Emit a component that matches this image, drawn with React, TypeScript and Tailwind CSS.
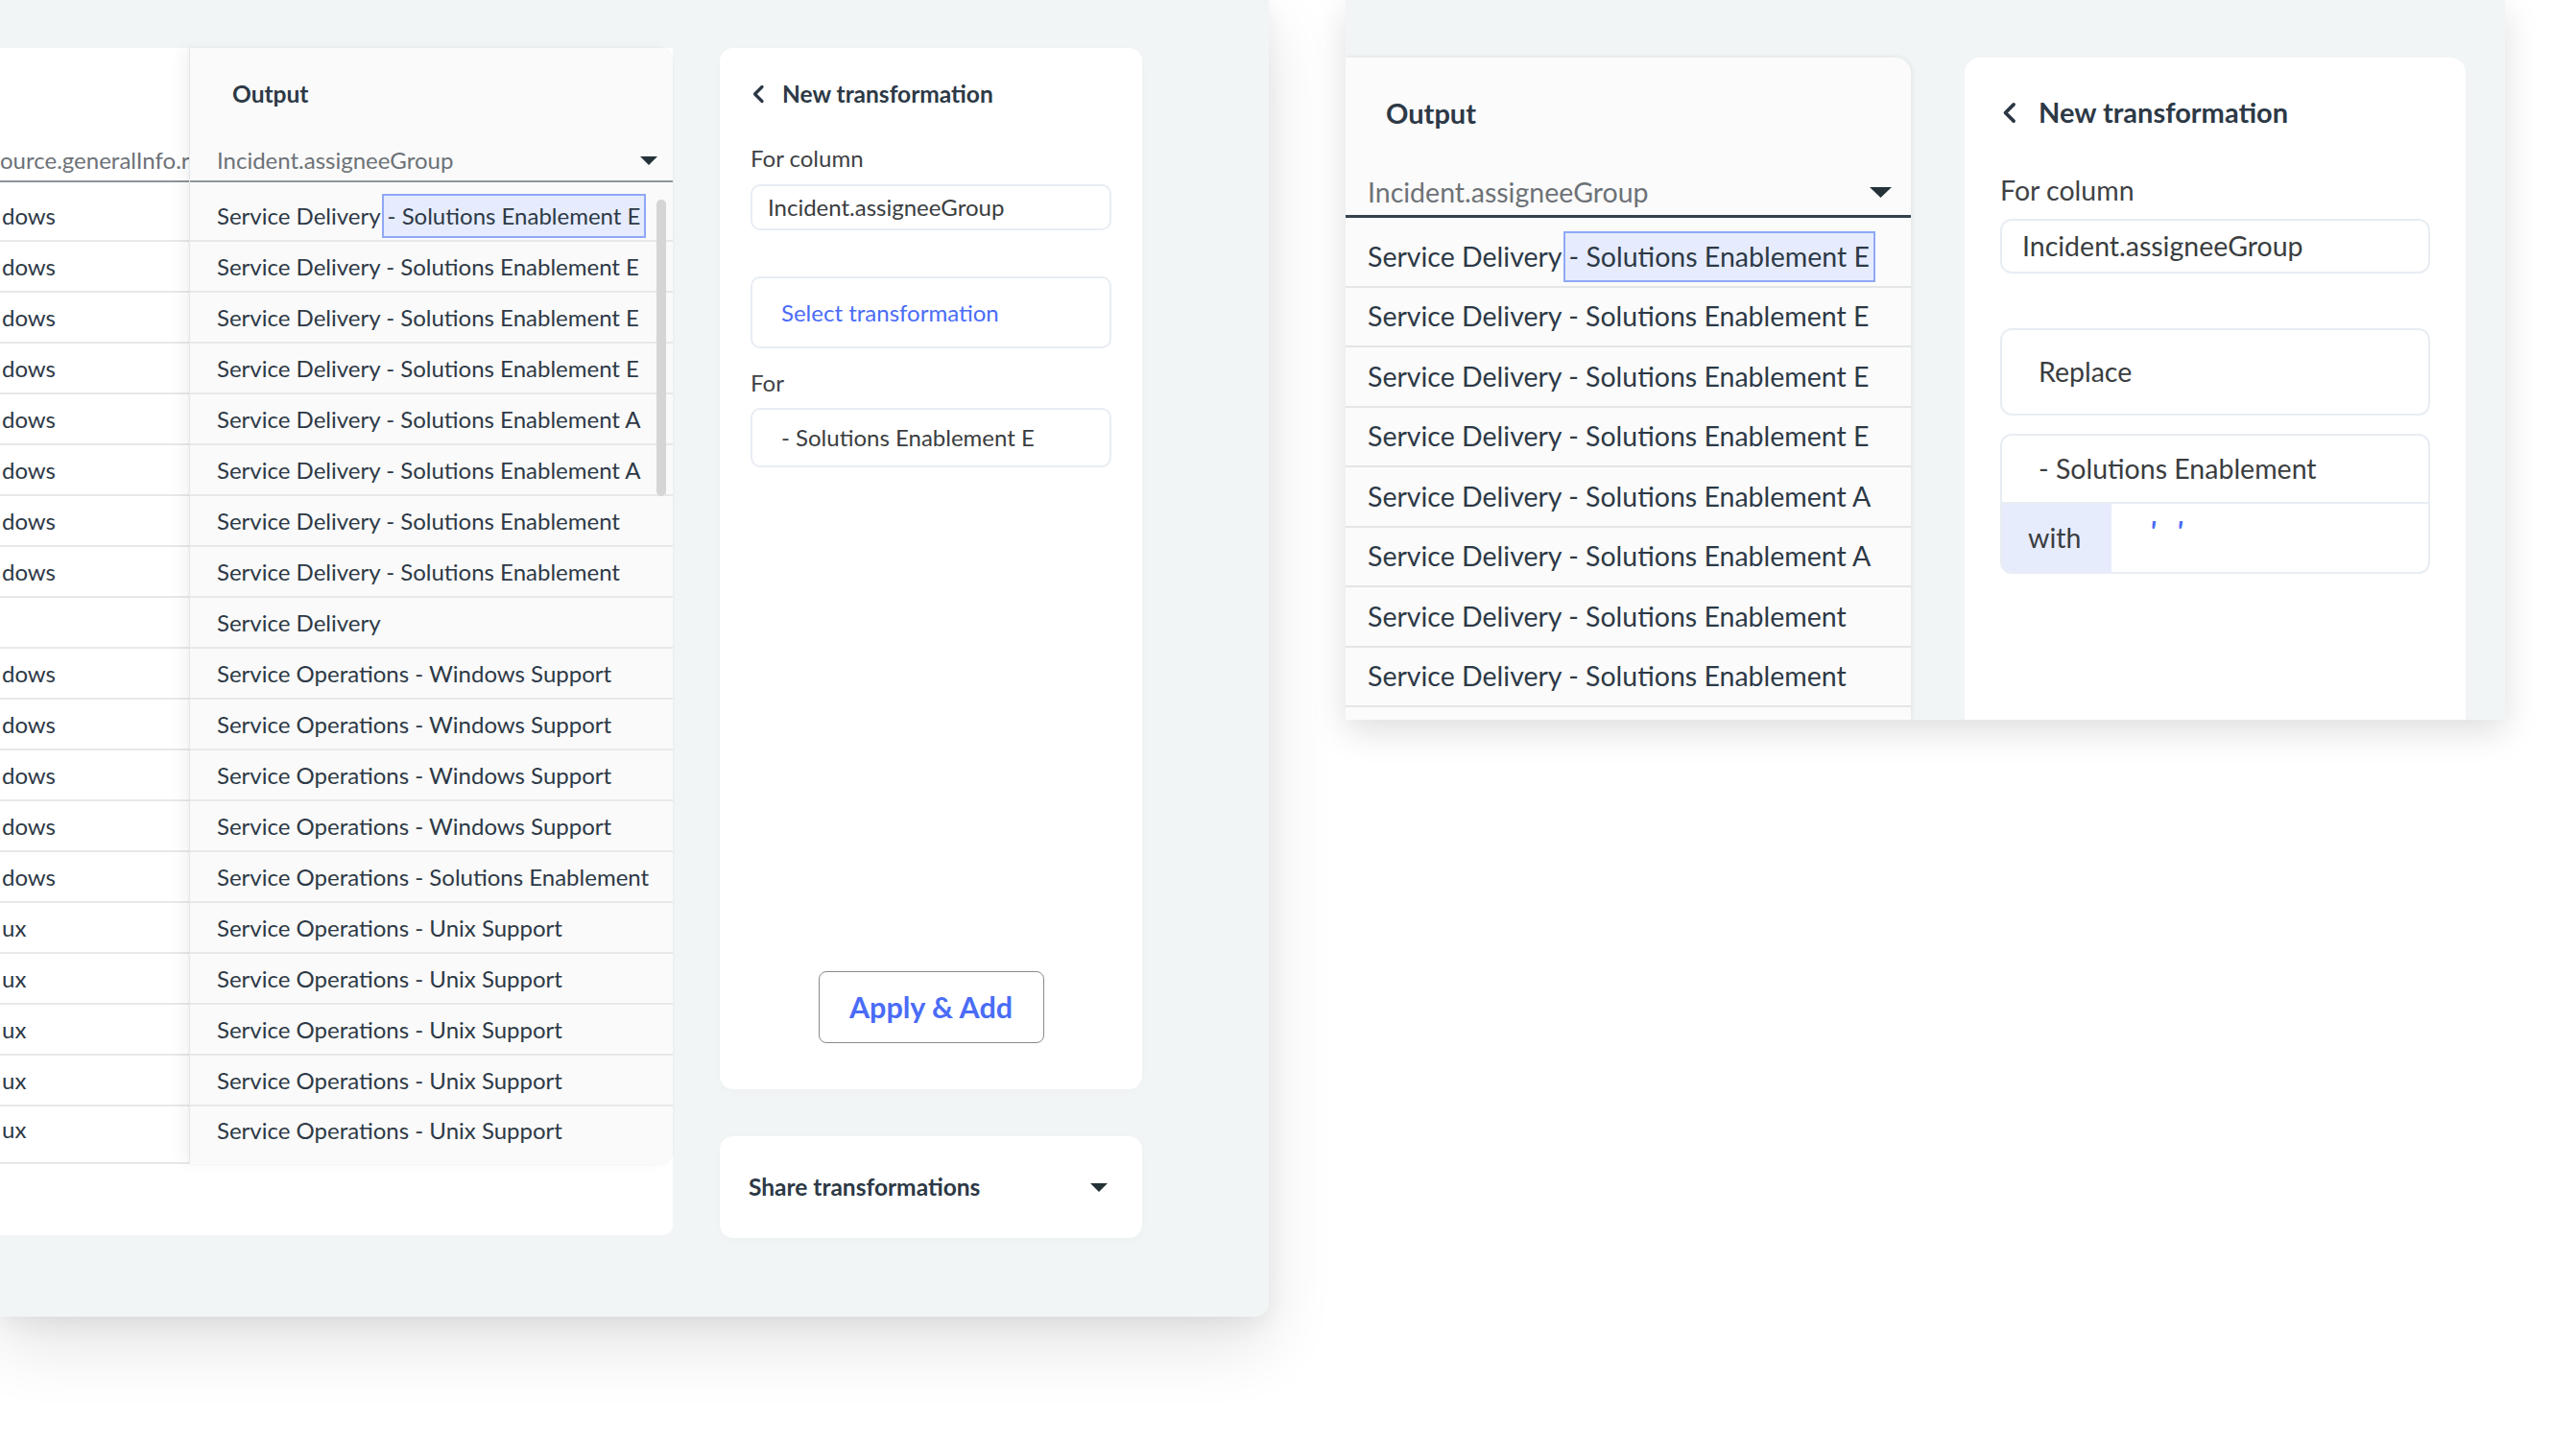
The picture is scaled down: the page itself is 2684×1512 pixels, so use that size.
import React from 'react';

type Row = { src: string; out: string; mark?: boolean };

const leftRows: Row[] = [
  { src: 'dows', out: 'Service Delivery', mark: true },
  { src: 'dows', out: 'Service Delivery - Solutions Enablement E' },
  { src: 'dows', out: 'Service Delivery - Solutions Enablement E' },
  { src: 'dows', out: 'Service Delivery - Solutions Enablement E' },
  { src: 'dows', out: 'Service Delivery - Solutions Enablement A' },
  { src: 'dows', out: 'Service Delivery - Solutions Enablement A' },
  { src: 'dows', out: 'Service Delivery - Solutions Enablement' },
  { src: 'dows', out: 'Service Delivery - Solutions Enablement' },
  { src: '', out: 'Service Delivery' },
  { src: 'dows', out: 'Service Operations - Windows Support' },
  { src: 'dows', out: 'Service Operations - Windows Support' },
  { src: 'dows', out: 'Service Operations - Windows Support' },
  { src: 'dows', out: 'Service Operations - Windows Support' },
  { src: 'dows', out: 'Service Operations - Solutions Enablement' },
  { src: 'ux', out: 'Service Operations - Unix Support' },
  { src: 'ux', out: 'Service Operations - Unix Support' },
  { src: 'ux', out: 'Service Operations - Unix Support' },
  { src: 'ux', out: 'Service Operations - Unix Support' },
  { src: 'ux', out: 'Service Operations - Unix Support' },
];

const rightRows: Row[] = leftRows.slice(0, 8).concat([{ src: '', out: '' }]);

const Caret = ({ w, h }: { w: number; h: number }) => (
  <svg width={w} height={h} viewBox="0 0 18 9" preserveAspectRatio="none">
    <path d="M0 0h18L9 9z" fill="#243238" />
  </svg>
);

const Back = ({ w, h }: { w: number; h: number }) => (
  <svg width={w} height={h} viewBox="0 0 16 20" fill="none">
    <path d="M12 2.5L4.5 10l7.5 7.5" stroke="#2b3744" strokeWidth="3.2" strokeLinecap="round" strokeLinejoin="round" />
  </svg>
);

const Marked = ({ row }: { row: Row }) =>
  row.mark ? (
    <>
      {row.out}
      <span className="ml-[1px] px-[4px] py-[3px] bg-[#e6ecfd] border-2 border-[#8fa8f6]">- Solutions Enablement E</span>
    </>
  ) : (
    <>{row.out}</>
  );

export default function App() {
  return (
    <div className="w-[2684px] h-[1512px] bg-white overflow-hidden flex items-start font-[Lato,'Liberation_Sans',sans-serif] text-[#2d3946]">
      {/* left window */}
      <div className="w-[1322px] h-[1372px] shrink-0 bg-[#f2f5f6] rounded-br-[14px] shadow-[0_30px_70px_rgba(0,0,0,0.11),0_8px_24px_rgba(0,0,0,0.06)] pt-[50px] flex items-start">
        <div className="w-[701px] h-[1237px] bg-white rounded-br-[10px] flex items-start">
          <div className="w-[197px] overflow-hidden shrink-0">
            <div className="h-[96px]" />
            <div className="h-[42px] flex items-center whitespace-nowrap text-[24px] text-[#6d7277]">ource.generalInfo.r</div>
            <div className="h-[2px] bg-[#8c9499]" />
            <div className="pt-[9px]">
              {leftRows.map((r, i) => (
                <div
                  key={i}
                  className={`${i === leftRows.length - 1 ? 'h-[60px] pb-[10px]' : 'h-[53px]'} border-b-2 border-[#e7e8e9] flex items-center pl-[2px] text-[24px] whitespace-nowrap`}
                >
                  {r.src}
                </div>
              ))}
            </div>
          </div>

          <div className="relative w-[504px] h-[1163px] shrink-0 bg-[#fafafa] border-l border-[#e4e7ea] rounded-tr-[14px] rounded-br-[14px] shadow-[-8px_0_16px_rgba(0,0,0,0.04),0_0_3px_rgba(0,0,0,0.06)]">
            <div className="h-[96px] flex items-center pl-[44px] text-[24.5px] font-bold">Output</div>
            <div className="h-[42px] flex items-center justify-between pl-[28px] pr-[16px] text-[24px] text-[#6d7277]">
              <span>Incident.assigneeGroup</span>
              <Caret w={18} h={9} />
            </div>
            <div className="h-[2px] bg-[#8c9499]" />
            <div className="pt-[9px]">
              {leftRows.map((r, i) => (
                <div
                  key={i}
                  className={`${i === leftRows.length - 1 ? 'h-[60px] pb-[10px] border-b-0' : 'h-[53px] border-b-2'} border-[#e7e8e9] flex items-center pl-[28px] text-[24px] whitespace-nowrap`}
                >
                  <Marked row={r} />
                </div>
              ))}
            </div>
            <div className="absolute left-[486px] top-[158px] w-[10px] h-[309px] rounded-full bg-[#d5d5d5]" />
          </div>
        </div>

        <div className="ml-[49px] w-[440px] flex flex-col gap-[49px]">
          <div className="h-[1085px] bg-white rounded-[14px] px-[32px] flex flex-col shadow-[0_2px_10px_rgba(0,0,0,0.025)]">
            <div className="mt-[33px] h-[30px] flex items-center gap-[17px] text-[24.5px] font-bold">
              <Back w={16} h={20} />
              <span>New transformation</span>
            </div>
            <div className="mt-[37px] h-[30px] flex items-center text-[24px] text-[#3f4245]">For column</div>
            <div className="mt-[12px] h-[48px] rounded-[10px] border-2 border-[#e8edf3] flex items-center pl-[16px] text-[24px] text-[#3a3d40]">
              Incident.assigneeGroup
            </div>
            <div className="mt-[48px] h-[75px] rounded-[10px] border-2 border-[#e8edf3] flex items-center pl-[30px] text-[24px] text-[#4a6cf7]">
              Select transformation
            </div>
            <div className="mt-[21px] h-[30px] flex items-center text-[24px] text-[#3f4245]">For</div>
            <div className="mt-[11px] h-[62px] rounded-[10px] border-2 border-[#e8edf3] flex items-center pl-[30px] text-[24px] text-[#3a3d40]">
              - Solutions Enablement E
            </div>
            <div className="flex-1" />
            <button className="self-center mb-[48px] w-[235px] h-[75px] rounded-[8px] border-[1.5px] border-[#8a8a8a] bg-white text-[30.5px] font-bold text-[#4a6cf7]">
              Apply &amp; Add
            </button>
          </div>

          <div className="h-[106px] bg-white rounded-[14px] flex items-center justify-between pl-[30px] pr-[36px] shadow-[0_2px_10px_rgba(0,0,0,0.025)]">
            <span className="text-[24.5px] font-bold">Share transformations</span>
            <Caret w={18} h={9} />
          </div>
        </div>
      </div>

      {/* right window */}
      <div className="ml-[80px] w-[1208px] h-[750px] shrink-0 bg-[#f2f5f6] shadow-[0_12px_34px_rgba(0,0,0,0.13)] pt-[60px] flex items-start overflow-hidden">
        <div className="w-[589px] h-[690px] shrink-0 bg-[#fbfbfb] rounded-tr-[16px] shadow-[0_0_6px_rgba(0,0,0,0.09)] overflow-hidden">
          <div className="h-[116px] flex items-center pl-[42px] text-[29px] font-bold">Output</div>
          <div className="h-[48px] flex items-center justify-between pl-[23px] pr-[20px] text-[28.5px] text-[#6d7277]">
            <span>Incident.assigneeGroup</span>
            <Caret w={23} h={11} />
          </div>
          <div className="h-[3px] bg-[#34424c]" />
          <div className="pt-[10px]">
            {rightRows.map((r, i) => (
              <div key={i} className="h-[62.5px] border-b-2 border-[#e4e5e6] flex items-center pl-[23px] text-[28.5px] whitespace-nowrap">
                <Marked row={r} />
              </div>
            ))}
          </div>
        </div>

        <div className="ml-[56px] w-[522px] h-[690px] shrink-0 bg-white rounded-t-[16px] px-[37px] flex flex-col">
          <div className="mt-[40px] h-[34px] flex items-center gap-[21px] text-[29px] font-bold">
            <Back w={19} h={23} />
            <span>New transformation</span>
          </div>
          <div className="mt-[47px] h-[34px] flex items-center text-[28.5px] text-[#3f4245]">For column</div>
          <div className="mt-[13px] h-[57px] rounded-[12px] border-2 border-[#e8edf3] flex items-center pl-[21px] text-[28.5px] text-[#3a3d40]">
            Incident.assigneeGroup
          </div>
          <div className="mt-[57px] h-[91px] rounded-[12px] border-2 border-[#e8edf3] flex items-center pl-[38px] text-[28.5px] text-[#3a3d40]">
            Replace
          </div>
          <div className="mt-[19px] h-[146px] rounded-[12px] border-2 border-[#e8edf3] flex flex-col overflow-hidden">
            <div className="h-[71px] border-b-2 border-[#e8edf3] flex items-center pl-[38px] text-[28.5px] text-[#3a3d40]">
              - Solutions Enablement
            </div>
            <div className="flex-1 flex">
              <div className="w-[114px] bg-[#e7ecfd] flex items-center pl-[27px] text-[28.5px] text-[#3a3d40]">with</div>
              <div className="flex items-start gap-[22px] pl-[40px] pt-[6px] text-[30px] italic font-bold text-[#4a6cf7]">
                <span>'</span>
                <span>'</span>
              </div>
            </div>
          </div>
        </div>
      </div>
    </div>
  );
}
